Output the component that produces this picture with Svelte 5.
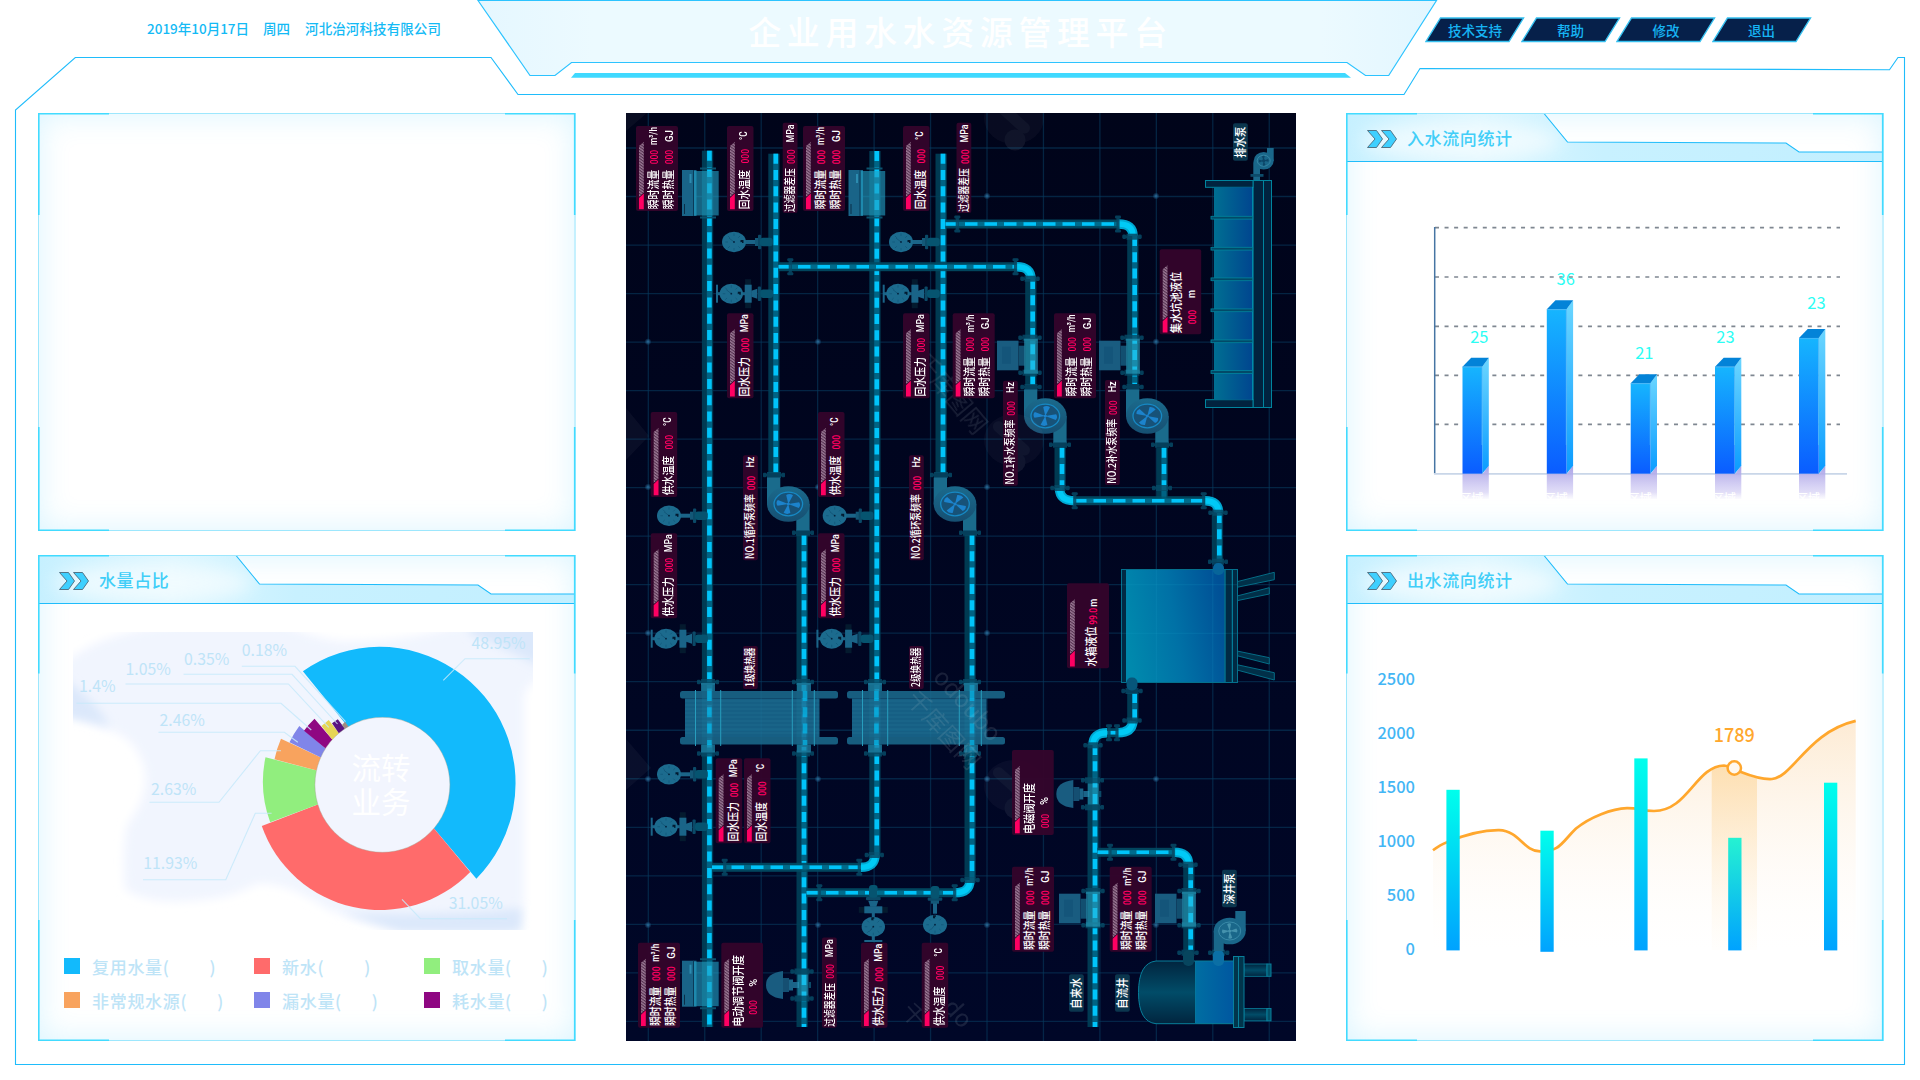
<script>
  const menu = ['技术支持', '帮助', '修改', '退出'];

  const legend = [
    { name: '复用水量', gap: 40, color: '#12bafc' },
    { name: '新水', gap: 40, color: '#ff6b6b' },
    { name: '取水量', gap: 30, color: '#91ee7e' },
    { name: '非常规水源', gap: 30, color: '#f8a35e' },
    { name: '漏水量', gap: 30, color: '#8085e9' },
    { name: '耗水量', gap: 30, color: '#8f0782' }
  ];

  const slices = [
    { color: '#12bafc', d: 'M302.9 671.3A136.5 136.5 0 0 1 379.3 646.8A136.3 136.3 0 0 1 476.4 878.7L434.2 828.7L382 785L347.3 726Z' },
    { color: '#ff6b6b', d: 'M470.2 872A125.5 125.5 0 0 1 261.8 826L317 804.7L382 785L434.2 828.7Z' },
    { color: '#91ee7e', d: 'M270.2 822.3A117 117 0 0 1 265.5 757.3L315 770L382 785L317 804.7Z' },
    { color: '#f8a35e', d: 'M274.5 759.3A107 107 0 0 1 281 738.7L320.4 757.3L382 785L315 770Z' },
    { color: '#8085e9', d: 'M289.5 742.3A98 98 0 0 1 299.3 726L324.7 747.7L382 785L320.4 757.3Z' },
    { color: '#8f0782', d: 'M304 730.7A92 92 0 0 1 314.5 718.7L331.6 738.7L382 785L324.7 747.7Z' },
    { color: '#e6d556', d: 'M321.5 726L328.7 720L338.2 732.3L382 785L331.6 738.7Z' },
    { color: '#5a1481', d: 'M332 723.3L337.8 719.3L344.4 728L382 785L338.2 732.3Z' },
    { color: '#a08a82', d: 'M341.8 725.3L345 721.7L348 726L382 785L344.4 728Z' }
  ];

  const callouts = [
    { t: '48.95%', x: 471.6, y: 643.3, p: '529.8,658.7 465,658.7 443.3,680.3' },
    { t: '0.18%', x: 241.8, y: 650.3, p: '241.8,666.3 295,666.3 345.5,721.7' },
    { t: '0.35%', x: 184, y: 659.2, p: '183.6,674.3 292,674.3 337.5,724' },
    { t: '1.05%', x: 125.5, y: 669.3, p: '125.5,684 288.4,684 328.7,727.3' },
    { t: '1.4%', x: 79, y: 686.3, p: '76.4,703.3 281,703.3 311.3,730' },
    { t: '2.46%', x: 159.6, y: 720, p: '158.5,732.3 284.4,732.3 297.8,742.3' },
    { t: '2.63%', x: 151, y: 789.3, p: '149.5,802.3 219,802.3 260.4,750.7 281,750.7' },
    { t: '11.93%', x: 143.3, y: 863.3, p: '143,879.7 225.8,879.7 255.3,813.3 271.6,813.3' },
    { t: '31.05%', x: 448.7, y: 903.3, p: '507,918.7 420.4,918.7 402,899.3' }
  ];

  const inflow = [
    { x: 1462.5, top: 366.7, v: '25', lx: 1479.3, ly: 337.3 },
    { x: 1546.8, top: 309.3, v: '36', lx: 1565.7, ly: 279.3 },
    { x: 1630.7, top: 383.3, v: '21', lx: 1644.3, ly: 353.7 },
    { x: 1715, top: 366.7, v: '23', lx: 1725.4, ly: 337.3 },
    { x: 1799, top: 338, v: '23', lx: 1816.4, ly: 303.3 }
  ];
  const inflowGrid = [227.7, 277, 326.3, 375.3, 424.3];

  const outflowTicks = ['2500', '2000', '1500', '1000', '500', '0'];
  const outflow = [
    { x: 1446.4, top: 789.8, bottom: 950.4 },
    { x: 1540.4, top: 830.7, bottom: 951.8 },
    { x: 1634.3, top: 758.4, bottom: 950.4 },
    { x: 1728.2, top: 837.8, bottom: 950.4 },
    { x: 1824, top: 782.7, bottom: 950.4 }
  ];
  const curve =
    'M1433 850.3C1438 846.5 1442 844 1447 842.2C1462 836 1480 830 1499 830.2C1520 831 1523 851 1540 851.4C1560 852 1562 842 1576 828.5C1590 817 1612 808.5 1627 808.1C1640 808 1640 811 1654 811C1688 811 1696 766 1724 765.5C1732 766 1733 768 1741 772C1751 776 1762 779.6 1772 779C1793 777 1808 732 1855.7 720.9';

  const gridX = Array.from({ length: 12 }, (_, i) => 648.3 + i * 56.45);
  const gridY = Array.from({ length: 19 }, (_, i) => 148 + i * 48.52);
  const stars = [
    [648, 341.7], [818, 341.7], [987, 196], [1156, 196], [1156, 341.7], [648, 487], [818, 487], [987, 487],
    [648, 633], [987, 633], [1156, 633], [648, 779], [818, 779], [987, 779], [1156, 779],
    [648, 925], [818, 925], [987, 925], [1156, 925]
  ];

  // Vertical runs: [x, top, bottom]; horizontal runs: [y, left, right]
  const vertical = [
    [709.4, 150.7, 1027], [775.8, 153.7, 473], [876.8, 151, 855], [943, 153.7, 473],
    [804, 535, 1027], [972, 535, 880], [1032.7, 279, 385], [1134.7, 236, 384],
    [1062, 447.7, 488], [1164, 447.7, 499], [1219.3, 513, 562], [1134.7, 693, 721],
    [1095, 745, 1027], [1190.7, 864, 950]
  ];
  const horizontal = [
    [266.7, 778.5, 1017], [224, 945.5, 1119], [500.7, 1074, 1205], [732.7, 1105, 1120],
    [852.3, 1097.5, 1174], [867.3, 712, 861], [892.7, 806.5, 955]
  ];
  const bends = [
    'M1016.7 266.7Q1031 266.7 1031 279', 'M1118.7 224Q1133 224 1133 236', 'M1059.5 488Q1059.5 500.7 1074 500.7',
    'M1205 500.7Q1218.5 500.7 1218.5 512.5', 'M1133 721Q1132 732.7 1118 732.7', 'M1107 732.7Q1093 732.7 1093 745',
    'M1174 852.3Q1188.5 852.3 1188.5 864', 'M861 867.3Q875 867.3 875 855', 'M955 892.7Q970 892.7 970 880'
  ];
  const flangesH = [
    [1132, 236.7, 19], [1030, 278.7, 19], [1031, 387, 21], [1133, 387, 21], [1030, 337.7, 23], [1030, 372.7, 23],
    [1132, 337.7, 23], [1132, 372.7, 23], [1060, 444.7, 22], [1162, 444.7, 22], [1060, 488, 19], [1162, 488, 20],
    [1218, 512.7, 19], [1218, 561.7, 20], [1132, 691, 21], [1132, 720.5, 19], [1093, 745.3, 19], [1092.5, 780.3, 23],
    [1092.5, 807.3, 23], [1188, 864.7, 19], [1093, 891, 23], [1093, 925.3, 23], [1189, 891, 23], [1189, 925.3, 23],
    [1188, 952.7, 21], [1218.7, 952.7, 21], [874.3, 855, 19], [970, 880, 19], [774, 475, 22], [803, 532.7, 22],
    [941, 475, 22], [970, 532.7, 22], [708, 682, 22], [803, 682, 22], [875, 682, 22], [970, 682, 22],
    [708, 753.5, 22], [803, 753.5, 22], [875, 753.5, 22], [970, 753.5, 22], [802, 971.5, 23], [802, 998.5, 23]
  ];
  const flangesV = [
    [1118, 224], [957.3, 224], [790.3, 266.7], [1015.5, 266.7], [1074.7, 500.7], [1203.7, 500.7], [1109, 732.7],
    [1117, 732.7], [1110, 852.3], [1173.5, 852.3], [724.7, 867.3], [859.3, 867.3], [819.3, 892.7], [954.7, 892.7]
  ];
  // [x, y, rotation of the fan]
  const pumps = [[788.3, 504, 12], [955, 504, 35], [1045.3, 416, 12], [1147.3, 416, 35]];
  const bigMeters = [[682, 170], [848.5, 170], [682, 960.7]];
  const smallMeters = [[997, 340.7], [1099, 340.7], [1059, 893.7], [1155, 893.7]];
  const thermometers = [[734, 242, 0], [901, 242, 0], [669, 515.7, 0], [834.7, 515.7, 0], [669, 774.3, 0], [935, 924.7, -90]];
  const manometers = [[731.3, 293.7, 0], [898, 293.7, 0], [666, 638.7, 0], [831.7, 638.7, 0], [666, 826.7, 0], [873.3, 926.7, -90]];
  const valves = [[766, 985], [1056.3, 794]];
  const exchangers = [680, 847];
  const poolWalls = [217.7, 248.7, 279.3, 310.3, 341.3, 372];

  // Text run on a tag: s = text, x = start along the tag, y = middle across it, l = length, k = kind
  const run = (s, x, y, l, k = 'cn') => ({ s, x, y, l, k });
  const flow = (x, b) => ({
    x, b, w: 42, h: 85, strip: true,
    runs: [
      run('瞬时流量', 1.7, 17, 39.5), run('000', 46.7, 17.3, 14.5, 'num'), run('m³/h', 66, 17, 18, 'unit'),
      run('瞬时热量', 1.7, 32.3, 39.5), run('000', 46.7, 32.6, 14.5, 'num'), run('GJ', 69, 32.3, 12, 'unit')
    ]
  });
  const single = (x, b, name, unit) => ({
    x, b, w: 26.5, h: 85, strip: true,
    runs: [
      run(name, 1.7, 17.7, 39.5), run('000', unit === 'MPa' ? 46 : 47.5, 18.2, 14.5, 'num'),
      unit === 'MPa' ? run('MPa', 66, 17.2, 18, 'unit') : run('°C', 71, 16, 8.5, 'unit')
    ]
  });
  const filter = (x, b) => ({
    x, b, w: 14.8, h: 90.3,
    runs: [run('过滤器差压', 1, 7.6, 43.7, 'sm'), run('000', 49, 8.2, 14.5, 'num'), run('MPa', 70.5, 6.8, 18, 'unit')]
  });
  const pumpTag = (x, b, name) => ({
    x, b, w: 14.8, h: 105,
    runs: [run(name, 1.3, 6.5, 64.7, 'sm'), run('000', 70, 8, 14.5, 'num'), run('Hz', 92.7, 6.5, 11, 'unit')]
  });
  const tags = [
    flow(636, 211), flow(803, 211), flow(952.7, 398.3), flow(1054, 398.3), flow(638, 1027.7), flow(1012, 951.7), flow(1109.7, 951.7),
    single(727, 211, '回水温度', '°C'), single(903, 211, '回水温度', '°C'),
    single(727, 398.3, '回水压力', 'MPa'), single(903, 398.3, '回水压力', 'MPa'),
    single(650.7, 497, '供水温度', '°C'), single(818, 497, '供水温度', '°C'),
    single(650.7, 618.3, '供水压力', 'MPa'), single(818, 618.3, '供水压力', 'MPa'),
    single(715.7, 843.3, '回水压力', 'MPa'), single(744, 843.3, '回水温度', '°C'),
    single(861, 1027.7, '供水压力', 'MPa'), single(921.7, 1027.7, '供水温度', '°C'),
    filter(782.7, 213), filter(956.5, 213), filter(822, 1027.7),
    pumpTag(1003, 485.7, 'NO.1补水泵频率'), pumpTag(1105, 485, 'NO.2补水泵频率'),
    pumpTag(743, 560.3, 'NO.1循环泵频率'), pumpTag(909, 560.3, 'NO.2循环泵频率'),
    { x: 743, b: 689, w: 14.8, h: 43, runs: [run('1级换热器', 2, 6.5, 39.5, 'sm')] },
    { x: 909, b: 689, w: 14.8, h: 43, runs: [run('2级换热器', 2, 6.5, 39.5, 'sm')] },
    { x: 1159.7, b: 334.3, w: 41.5, h: 85, strip: true, runs: [run('集水坑池液位', 1, 17.3, 61.5), run('000', 10, 32.5, 14.5, 'num'), run('m', 36.3, 31.3, 8, 'unit')] },
    { x: 721.3, b: 1027.7, w: 41.7, h: 85, strip: true, runs: [run('电动调节阀开度', 1, 17.3, 71.7), run('000', 13, 31.8, 14.5, 'num'), run('%', 41, 31.5, 8, 'unit')] },
    { x: 1012, b: 835, w: 41.7, h: 85, strip: true, runs: [run('电磁阀开度', 1, 17.3, 51), run('000', 6.7, 32.5, 14.5, 'num'), run('%', 30, 31.3, 8, 'unit')] },
    { x: 1067, b: 668.3, w: 42, h: 85, strip: true, runs: [run('水箱液位', 1.7, 24, 40), run('99.0', 43.5, 25.5, 17, 'num'), run('m', 61.5, 25.3, 8, 'unit')] },
    { x: 1233, b: 160.7, w: 14.8, h: 37.5, teal: true, runs: [run('排水泵', 3, 7.2, 31)] },
    { x: 1222, b: 907.3, w: 14.8, h: 37.5, teal: true, runs: [run('深井泵', 3, 7.2, 31)] },
    { x: 1069, b: 1011.7, w: 14.8, h: 37.5, teal: true, runs: [run('自来水', 3, 7.2, 31)] },
    { x: 1115, b: 1011.7, w: 14.8, h: 37.5, teal: true, runs: [run('自流井', 3, 7.2, 31)] }
  ];
</script>

{#snippet panelFrame(h, titled)}
  <svg class="layer" viewBox="0 0 538 {h}" width="538" height={h}>
    {#if titled}
      <path d="M0 .5H198L221.5 29L440 30L453 39H537V48.5H0Z" fill="url(#tabFill)" />
      <ellipse cx="115" cy="28" rx="100" ry="20" fill="#fff" opacity=".6" filter="url(#soft)" />
      <path d="M0 .5H198L221.5 29L440 30L453 39H537M0 48.5H537" class="line" />
      <path d="M21.5 17.5H30.5L36.5 26L30.5 34.5H21.5L29 26ZM35.5 17.5H44.5L50.5 26L44.5 34.5H35.5L43 26Z" fill="#3fd0ff" stroke="#4b6a7c" stroke-width=".9" />
    {/if}
    <rect x=".5" y=".5" width="536.5" height={h - 1} class="edge" />
    <path class="corner" d="M71 .8H.8V{h * 0.244}M467 .8H536.7V{h * 0.244}M71 {h - 0.8}H.8V{h * 0.751}M467 {h - 0.8}H536.7V{h * 0.751}" />
  </svg>
{/snippet}

{#snippet fan(rx, ry, color)}
  {#each [0, 90, 180, 270] as a}
    <path d="M0 0L{rx * 0.78} {-ry * 0.36}Q{rx} {-ry * 0.1} {rx * 0.86} {ry * 0.2}Z" fill={color} transform="rotate({a})" />
  {/each}
  <circle r="1.6" fill={color} />
{/snippet}

{#snippet dial(rx, ry)}
  <ellipse {rx} {ry} fill="#1c6b8e" />
  {#each [0, 45, 90, 135, 180, 225, 270, 315] as a}
    <path d="M6 0H8.6" stroke="#0f5275" stroke-width=".6" transform="rotate({a})" />
  {/each}
  <path d="M-5 -4L0 0" stroke="#0d4a6c" stroke-width=".6" />
  <circle r=".9" fill="#03233f" /><path d="M6.5 -2H9.5V1H8V0H6.5Z" fill="#021a30" />
{/snippet}

<div class="screen">
  <svg class="layer" viewBox="0 0 1920 1080" width="1920" height="1080">
    <defs>
      <linearGradient id="headFill"><stop offset="0" stop-color="#e5f7ff" /><stop offset=".12" stop-color="#ecfaff" /><stop offset=".88" stop-color="#ecfaff" /><stop offset="1" stop-color="#e2f6ff" /></linearGradient>
      <linearGradient id="tabFill"><stop offset="0" stop-color="#c6f0ff" /><stop offset=".25" stop-color="#dcf6ff" /><stop offset=".48" stop-color="#c8f1ff" /><stop offset="1" stop-color="#c2efff" /></linearGradient>
      <filter id="soft" x="-30%" y="-60%" width="160%" height="220%"><feGaussianBlur stdDeviation="9" /></filter>
    </defs>
    <path class="line" d="M15.5 1064.5V110L75.3 57.5H491L518 94.5H1404L1420 68.5L1889.5 69.7L1898 57.5H1904.5V1064.5Z" />
    <path d="M478 .5L530 75.5H555L571.5 62.5H1347L1365.5 75.5H1388.7L1436.5 .5Z" fill="url(#headFill)" stroke="#2cc3ff" stroke-width="1.2" />
    <path d="M575 73H1345L1351 77.7H571Z" fill="#3fd9ff" />
  </svg>

  <div class="content">
    <header>
      <div class="date"><span>2019年10月17日</span><span>周四</span><span>河北治河科技有限公司</span></div>
      <h1>企业用水水资源管理平台</h1>
      <nav>
        {#each menu as item}
          <a class="tab">
            <svg class="layer" viewBox="0 0 100 26" width="100" height="26"><path d="M15.5 1H98.5L84 24.5H1Z" fill="#06204a" stroke="#35c0f0" stroke-width="1.4" /></svg>
            <span>{item}</span>
          </a>
        {/each}
      </nav>
    </header>

    <main>
      <div class="column">
        <section class="panel short">{@render panelFrame(418, false)}</section>
        <section class="panel tall">
          {@render panelFrame(486, true)}
          <div class="body">
            <h2>水量占比</h2>
            <svg class="chart" viewBox="38 605 538 333" width="538" height="333">
              <defs>
                <clipPath id="cloudClip"><rect x="73" y="632" width="460" height="298" /></clipPath>
                <filter id="cloudBlur"><feGaussianBlur stdDeviation="5" /></filter>
              </defs>
              <g clip-path="url(#cloudClip)">
                <path filter="url(#cloudBlur)" fill="#f1f5fe" d="M60 664L92 645Q130 628 190 622H280Q310 638 340 641Q410 643 467 622H550V676Q524 682 524 700V900Q522 930 500 934H440Q380 928 329 910Q285 880 256 884Q235 896 210 899Q150 907 125 889Q122 850 127 825Q154 790 142 760Q130 733 104 729L60 709Z" />
                <path filter="url(#cloudBlur)" fill="#dbe8fb" d="M470 618H550V672Q520 655 470 634ZM340 912Q420 918 522 908V932H400ZM56 674Q92 695 110 726L60 716Z" />
              </g>
              {#each slices as s}<path d={s.d} fill={s.color} />{/each}
              <circle cx="382.4" cy="784.8" r="67.5" fill="#f2f5fe" stroke="#a0a08a" stroke-width=".4" />
              {#each callouts as c}
                <polyline points={c.p} class="lead" />
                <text x={c.x} y={c.y + 5.6} class="pct">{c.t}</text>
              {/each}
              <text x="381" y="778.5" class="hub">流转</text>
              <text x="381" y="813" class="hub">业务</text>
            </svg>
            <div class="legend">
              {#each legend as l}
                <div class="key"><i style:background={l.color}></i><span>{l.name}(</span><span style:margin-left="{l.gap}px">)</span></div>
              {/each}
            </div>
          </div>
        </section>
      </div>

      <svg class="diagram" viewBox="626 113 670 928" width="670" height="928">
        <defs>
          <linearGradient id="night" x2="0" y2="1"><stop offset="0" stop-color="#00041a" /><stop offset="1" stop-color="#000728" /></linearGradient>
          <linearGradient id="pool"><stop offset="0" stop-color="#006f92" /><stop offset="1" stop-color="#00458f" /></linearGradient>
          <linearGradient id="cistern" y1=".6" y2=".4"><stop offset="0" stop-color="#0089ad" /><stop offset=".5" stop-color="#0071a6" /><stop offset="1" stop-color="#005096" /></linearGradient>
          <linearGradient id="wellWater"><stop offset="0" stop-color="#006ea2" /><stop offset="1" stop-color="#0057a0" /></linearGradient>
          <linearGradient id="well" x2="0" y2="1"><stop offset="0" stop-color="#01253f" /><stop offset=".5" stop-color="#014c68" /><stop offset="1" stop-color="#01253f" /></linearGradient>
          <linearGradient id="metal" x2="0" y2="1"><stop offset="0" stop-color="#1b6a8c" /><stop offset="1" stop-color="#164f72" /></linearGradient>
          <pattern id="hatch" width="2.4" height="2.4" patternUnits="userSpaceOnUse" patternTransform="rotate(35)"><rect width="2.4" height="2.4" fill="#54304f" /><rect width="1.3" height="2.4" fill="#9c7a96" /></pattern>
          <radialGradient id="star"><stop offset="0" stop-color="#2a6c9a" /><stop offset="1" stop-color="#2a6c9a" stop-opacity="0" /></radialGradient>
        </defs>
        <rect x="626" y="113" width="670" height="928" fill="url(#night)" />
        {#each gridX as x}<path d="M{x} 113V1041" class="grid" />{/each}
        {#each gridY as y}<path d="M626 {y}H1296" class="grid" />{/each}
        {#each stars as [x, y]}<circle cx={x} cy={y} r="3.5" fill="url(#star)" />{/each}

        <!-- pump and drain pool -->
        <g fill="#1a678a">
          <rect x="1253.3" y="160" width="6.7" height="23" rx="3" /><rect x="1267" y="148" width="6.7" height="13" />
          <ellipse cx="1263.7" cy="160.7" rx="10" ry="8.8" /><rect x="1250.5" y="174" width="13" height="2.8" fill="#0d4b6a" />
          <g transform="translate(1263.7 160.7)"><ellipse rx="6.5" ry="5.5" fill="none" stroke="#4698b4" stroke-width=".6" />{@render fan(5.5, 5, '#0c4668')}</g>
        </g>
        <g fill="#01233f" stroke="#00859f">
          <rect x="1253" y="180.5" width="10.5" height="227" /><rect x="1263.5" y="180.5" width="8" height="227" />
          <rect x="1205.5" y="180.5" width="47.5" height="6.8" /><rect x="1205.5" y="399.7" width="47.5" height="7.8" />
          <rect x="1214" y="187.3" width="38.7" height="212.4" fill="url(#pool)" stroke="none" /><path d="M1252.7 187V400" stroke="#009ab4" />
          {#each poolWalls as y}<rect x="1211" y={y - 1.4} width="41.7" height="2.8" fill="#024a68" stroke-width=".8" />{/each}
        </g>

        <!-- pipe network -->
        {#each vertical as [x, a, b]}
          <rect x={x - 7.5} y={a} width="11.3" height={b - a} fill="#003f57" opacity=".92" />
          <rect x={x - 2.6} y={a} width="5.2" height={b - a} fill="#006384" />
          <path d="M{x} {a}V{b}" class="flow v" />
        {/each}
        {#each horizontal as [y, a, b]}
          <rect x={a} y={y - 4.5} width={b - a} height="9" fill="#014b63" opacity=".92" />
          <rect x={a} y={y - 2.2} width={b - a} height="4.4" fill="#006c8c" />
          <path d="M{a} {y}H{b}" class="flow h" />
        {/each}
        {#each bends as d}
          <path {d} fill="none" stroke="#00a8d2" stroke-width="9.5" /><path {d} fill="none" stroke="#00caf6" stroke-width="5.5" />
        {/each}
        {#each flangesH as [x, y, w]}
          <g class="flange"><rect x={x - w / 2} y={y - 1.3} width={w} height="2.6" /><rect x={x - w / 2} y={y - 2.3} width="3.5" height="4.6" rx="1" /><rect x={x + w / 2 - 3.5} y={y - 2.3} width="3.5" height="4.6" rx="1" /><rect x={x - w / 2 + 4} y={y - 3} width={w - 8} height="6" /></g>
        {/each}
        {#each flangesV as [x, y]}
          <g class="flange"><rect x={x - 1.6} y={y - 8} width="3.2" height="16" /><rect x={x - 3} y={y - 8.5} width="6" height="3" rx="1" /><rect x={x - 3} y={y + 5.5} width="6" height="3" rx="1" /></g>
        {/each}

        <!-- water tank -->
        <g fill="#013049" stroke="#056c86">
          <path d="M1237 581.7L1274.3 572.3V579.7L1237 587.3ZM1237 596L1269.3 587.7V594L1237 600.7ZM1237 670L1274.3 680V672.7L1237 664.7ZM1237 655.7L1269.3 664V657.7L1237 651Z" />
          <rect x="1121.5" y="569.5" width="116" height="113" fill="#012a44" stroke="#04708d" />
          <rect x="1126" y="570" width="98.5" height="112" fill="url(#cistern)" stroke="none" />
          <path d="M1225 570V682M1232.3 570V682" stroke="#0590ad" />
          <rect x="1213" y="563" width="11" height="12" rx="5" fill="#07659a" stroke="none" /><rect x="1126.5" y="677.5" width="11" height="13" rx="5" fill="#07567a" stroke="none" />
        </g>
        {#each gridX.slice(9, 11) as x}<path d="M{x} 570V682" stroke="#1aa0c8" stroke-width="1" opacity=".18" />{/each}
        <path d="M1121 584.7H1237M1121 633.3H1237" stroke="#1aa0c8" opacity=".18" />

        <!-- well tank with its pump -->
        <g stroke="#087f9b">
          <path d="M1195.5 961H1156Q1138.5 963 1138.5 992.5T1156 1023.7H1195.5Z" fill="url(#well)" />
          <rect x="1195.5" y="961" width="38.5" height="62.7" fill="url(#wellWater)" stroke="none" /><path d="M1195.5 961H1234M1195.5 1023.7H1234" />
          <rect x="1244" y="964" width="23" height="12.3" fill="url(#well)" stroke-width=".8" /><rect x="1267" y="964" width="4" height="12.3" fill="#035069" />
          <rect x="1244" y="1008.5" width="23" height="12.3" fill="url(#well)" stroke-width=".8" /><rect x="1267" y="1008.5" width="4" height="12.3" fill="#035069" />
          <rect x="1233.5" y="956.5" width="5" height="71" fill="#01354c" /><rect x="1238.5" y="956.5" width="5.5" height="71" fill="#01354c" />
        </g>
        <rect x="1183" y="950" width="11" height="16" rx="5" fill="#07455e" /><rect x="1213" y="950" width="11" height="16" rx="5" fill="#0b6fa5" />
        <g fill="#1a678a">
          <rect x="1213.7" y="931" width="10" height="20" /><rect x="1235.3" y="911" width="10.4" height="20" /><ellipse cx="1229.7" cy="931" rx="16" ry="13.3" />
          <g transform="translate(1229.7 931)"><ellipse rx="11" ry="9" fill="none" stroke="#4698b4" stroke-width=".7" />{@render fan(8.5, 7, '#4592ad')}</g>
        </g>

        <!-- devices on the pipes -->
        {#each pumps as [x, y, a]}
          <g transform="translate({x} {y})">
            <rect x="-21.3" y="-26.5" width="13.3" height="27" fill="#1a6b8c" /><rect x="8" y="0" width="13.3" height="26.5" fill="#1a6b8c" />
            <ellipse rx="21.3" ry="17.8" fill="url(#metal)" />
            <ellipse rx="14.3" ry="11.8" fill="#175278" stroke="#1789c4" stroke-width="1.3" />
            <g transform="scale(1 .84) rotate({a})">{@render fan(13, 12, '#1c83cc')}</g>
          </g>
        {/each}
        {#each bigMeters as [x, y]}
          <g transform="translate({x} {y})">
            <rect width="14.5" height="46" fill="#196488" /><rect x="12" y="1" width="24.7" height="44.5" fill="#22a0c4" opacity=".62" /><path d="M11.5 0V46" stroke="#0a3a58" /><path d="M2.5 34V44" stroke="#0a2e48" /><path d="M8.5 4V13" stroke="#2c8cb0" stroke-width="2" /><path d="M18 -1.5H34M18 47.5H34" stroke="#0b526e" stroke-width="2" />
          </g>
        {/each}
        {#each smallMeters as [x, y]}
          <g transform="translate({x} {y})">
            <rect width="21.5" height="29.6" fill="#195c80" /><rect x="5" y="6" width="9" height="17" fill="#14557a" /><rect x="21.5" y="5" width="6" height="20" fill="#124f70" /><rect x="27" y="-2" width="14" height="35" fill="#2fb4d4" opacity=".5" />
          </g>
        {/each}
        {#each thermometers as [x, y, r]}
          <g transform="translate({x} {y}) rotate({r})">
            <rect x="11" y="-2" width="11" height="4" fill="#1b6488" /><rect x="21" y="-4" width="4" height="8" fill="#135878" /><rect x="24" y="-7.3" width="3.2" height="14.6" rx="1" fill="#0b4a68" /><rect x="26" y="-4.3" width="12.8" height="8.6" rx="3" fill="#065470" />
            {@render dial(r ? 10 : 12, r ? 12 : 10.2)}
          </g>
        {/each}
        {#each manometers as [x, y, r]}
          <g transform="translate({x} {y}) rotate({r})">
            <rect x="-15.3" y="-9" width="2" height="18" fill="#1b6488" /><rect x="-14" y="-1.5" width="30" height="3" fill="#1b6488" />
            <rect x="13.8" y="-14.5" width="6" height="29" fill="#041a2e" /><rect x="13.4" y="-9" width="7" height="18" fill="#1a6488" /><path d="M20 -3L26 -5V5L20 3Z" fill="#1a6488" /><rect x="26.5" y="-7.3" width="3.2" height="14.6" rx="1" fill="#0b4a68" /><rect x="29" y="-4.3" width="12.8" height="8.6" rx="3" fill="#065470" />
            {@render dial(r ? 10 : 11.7, r ? 11.7 : 10)}
          </g>
        {/each}
        {#each valves as [x, y]}
          <g transform="translate({x} {y})">
            <path d="M17 -14Q0 -12 0 0T17 14Z" fill="#195c80" /><rect x="17" y="-7" width="6" height="14" fill="#154f72" /><rect x="23" y="-5.5" width="4" height="11" fill="#1b6488" /><rect x="27" y="-3" width="6" height="6" fill="#1b6488" /><rect x="31.5" y="-10.5" width="11" height="21" fill="#2fb4d4" opacity=".45" /><rect x="42.5" y="-3" width="2.5" height="6" fill="#0b4a68" />
          </g>
        {/each}
        {#each exchangers as x}
          <g transform="translate({x} 691)">
            <g fill="#1f81a4" opacity=".75"><rect x="21" y="-8" width="14" height="8" /><rect x="117" y="-8" width="14" height="8" /><rect x="21" y="53.5" width="14" height="8" /><rect x="117" y="53.5" width="14" height="8" /></g>
            <rect width="158" height="7.5" rx="2.5" fill="#1a678a" opacity=".9" /><rect y="46" width="158" height="7.5" rx="2.5" fill="#1a678a" opacity=".9" />
            <rect x="5" y="7.5" width="134.5" height="38.5" fill="#1a6f94" opacity=".86" />
            {#each [10, 14, 18, 22, 26, 30, 34, 38, 42] as y}<path d="M5 {y}H139.5" stroke="#3c9cba" stroke-width=".6" opacity=".28" />{/each}
            <path d="M15.5 -1V55M40.7 -1V55M112.3 -1V55M134.3 -1V55" stroke="#279dbd" stroke-width="1" />
            <path d="M29.4 0V54M125 0V54" class="flow v" opacity=".6" />
          </g>
        {/each}

        <!-- background marks -->
        <g fill="#b5c4cc" opacity=".09">
          {#each [[1014, 118], [1014, 440], [1014, 786]] as [x, y]}
            <ellipse cx={x} cy={y} rx="30" ry="26" opacity=".5" /><rect x={x - 26} y={y - 5} width="46" height="11" rx="5.5" transform="rotate(42 {x} {y})" /><circle cx={x + 1} cy={y + 22} r="10.5" />
          {/each}
          <path d="M626 408L649 436L626 460ZM626 739L651 768L626 790ZM626 113H647L626 131Z" opacity=".6" />
        </g>
        <g class="mark"><text transform="translate(914 362) rotate(50)">千库图网</text><text transform="translate(932 678) rotate(48)">odoubo</text><text transform="translate(905 700) rotate(48)">千库图网</text><text transform="translate(900 1012) rotate(48)">千</text><text transform="translate(942 1008) rotate(48)">do</text></g>

        <!-- value tags, read from bottom to top -->
        {#each tags as t}
          <g transform="translate({t.x} {t.b}) rotate(-90)">
            <rect width={t.h} height={t.w} rx="2" fill={t.teal ? '#0b3850' : '#33042b'} fill-opacity=".96" />
            {#if t.strip}
              <path d="M1.7 3H13L17.5 7.8H1.7Z" fill="#ff0062" /><path d="M14 3H65L69 7.8H18.5Z" fill="url(#hatch)" />
            {/if}
            {#each t.runs as r}
              <text x={r.x} y={r.y + (r.k === 'cn' ? 4.5 : r.k === 'sm' ? 4 : 4.2)} class={r.k} textLength={r.l} lengthAdjust="spacingAndGlyphs">{r.s}</text>
            {/each}
          </g>
        {/each}
      </svg>

      <div class="column">
        <section class="panel short">
          {@render panelFrame(418, true)}
          <div class="body">
            <h2>入水流向统计</h2>
            <svg class="chart" viewBox="1346 163 538 367" width="538" height="367">
              <defs>
                <linearGradient id="front" x2="0" y2="1"><stop offset="0" stop-color="#16b5fe" /><stop offset="1" stop-color="#0a5cff" /></linearGradient>
                <linearGradient id="side" x2="0" y2="1"><stop offset="0" stop-color="#6bd6ff" /><stop offset="1" stop-color="#0a9bff" /></linearGradient>
                <linearGradient id="mirror" x2="0" y2="1"><stop offset="0" stop-color="#a79fe6" /><stop offset=".8" stop-color="#cdc7f2" stop-opacity=".6" /><stop offset="1" stop-color="#d8d4f5" stop-opacity=".1" /></linearGradient>
              </defs>
              {#each inflowGrid as y}<path d="M1435 {y}H1840" stroke="#7f8791" stroke-width="1.7" stroke-dasharray="4 5.56" />{/each}
              <path d="M1434.7 227V474" stroke="#4675a3" stroke-width="1.5" />
              <path d="M1434 473.8H1847" stroke="#c9d6e8" stroke-width="1.8" />
              {#each inflow as b}
                <path d="M{b.x} 474H{b.x + 20}L{b.x + 26.3} 465.5V499H{b.x}Z" fill="url(#mirror)" />
                <path d="M{b.x + 19.7} {b.top}L{b.x + 26.3} {b.top - 9}V465.7L{b.x + 19.7} 473.7Z" fill="url(#side)" />
                <rect x={b.x} y={b.top} width="19.7" height={473.7 - b.top} fill="url(#front)" />
                <path d="M{b.x} {b.top}L{b.x + 8.7} {b.top - 9}H{b.x + 26.3}L{b.x + 19.7} {b.top}Z" fill="#0383d8" />
                <path d="M{b.x} {b.top + 0.4}H{b.x + 19.5}V445" fill="none" stroke="#4cb8f8" stroke-width=".8" />
                <text x={b.lx} y={b.ly + 5.7} class="value">{b.v}</text>
                <text x={b.x + 3} y="503" class="area">某区域</text>
              {/each}
            </svg>
          </div>
        </section>
        <section class="panel tall">
          {@render panelFrame(486, true)}
          <div class="body">
            <h2>出水流向统计</h2>
            <svg class="chart" viewBox="1346 605 538 434" width="538" height="434">
              <defs>
                <linearGradient id="area" x2="0" y2="1"><stop offset="0" stop-color="#fdebd4" /><stop offset="1" stop-color="#fff" stop-opacity=".2" /></linearGradient>
                <linearGradient id="band" x2="0" y2="1"><stop offset="0" stop-color="#fddfb2" /><stop offset="1" stop-color="#fff5e4" stop-opacity=".1" /></linearGradient>
                <linearGradient id="bar" x2="0" y2="1"><stop offset="0" stop-color="#00ffec" /><stop offset="1" stop-color="#00a2ff" /></linearGradient>
                <linearGradient id="barWarm" x2="0" y2="1"><stop offset="0" stop-color="#25f2d2" /><stop offset="1" stop-color="#00a2ff" /></linearGradient>
              </defs>
              <path d="{curve}V950H1433Z" fill="url(#area)" />
              <path d="M1711.7 770Q1718 765 1725 765.5C1737 768 1743 775 1757 778.5V950H1711.7Z" fill="url(#band)" />
              <path d={curve} fill="none" stroke="#ffa72d" stroke-width="2.7" />
              {#each outflow as b, i}<rect x={b.x} y={b.top} width="13.3" height={b.bottom - b.top} fill={i === 3 ? 'url(#barWarm)' : 'url(#bar)'} />{/each}
              <circle cx="1734.3" cy="768" r="6.7" fill="#fff8ee" stroke="#ffa72d" stroke-width="2.5" />
              <text x="1734.3" y="742" class="peak" textLength="41" lengthAdjust="spacingAndGlyphs">1789</text>
              {#each outflowTicks as t, i}<text x="1415" y={684.8 + i * 54} class="tick">{t}</text>{/each}
            </svg>
          </div>
        </section>
      </div>
    </main>
  </div>
</div>

<style>
  :global(body) { background: #fff; overflow: hidden; }
  .screen, .screen * { box-sizing: border-box; }
  .screen { display: grid; width: 1920px; height: 1080px; background: #fff; font-family: 'Noto Sans CJK SC', 'Noto Sans', sans-serif; }
  .layer, .content, .body, .tab > span { grid-area: 1 / 1; }
  svg { display: block; }
  h1, h2 { margin: 0; }

  .content { display: flex; flex-direction: column; }
  header { display: grid; grid-template-columns: 477px 958px 1fr; height: 113px; }
  .date { display: flex; padding: 18px 0 0 147px; font-size: 13.5px; line-height: 20px; font-weight: 500; color: #14baf5; white-space: nowrap; }
  .date span + span { margin-left: 14px; }
  .date span:last-child { margin-left: 15px; letter-spacing: 0.1px; }
  h1 { padding: 11px 0 0 9px; text-align: center; font-size: 33px; line-height: 40px; font-weight: 500; letter-spacing: 5.6px; color: #fff; }
  nav { display: flex; padding: 17px 0 0; margin-left: -10px; }
  .tab { display: grid; width: 100px; height: 26px; margin-right: -4.5px; place-items: center; font-size: 13.5px; line-height: 24px; font-weight: 500; color: #16b4f4; }
  .tab > span { padding-bottom: 1px; }

  main { display: flex; gap: 50px; padding: 0 37px 0 38px; }
  .column { display: flex; flex-direction: column; gap: 24px; width: 538px; }
  .panel { display: grid; box-shadow: inset 0 0 32px rgba(60, 200, 255, 0.2); }
  .short { height: 418px; }
  .tall { height: 486px; }
  .body { display: flex; flex-direction: column; }
  h2 { height: 50px; padding: 2px 0 0 61px; font-size: 17px; line-height: 46px; font-weight: 500; letter-spacing: 0.6px; color: #41cef8; }
  .line { fill: none; stroke: #1fbcfb; stroke-width: 1.1; }
  .edge { fill: none; stroke: #9de7fd; stroke-width: 1; }
  .corner { fill: none; stroke: #42dbff; stroke-width: 1.6; }

  .lead { fill: none; stroke: #c6e9fa; stroke-width: 1.1; stroke-opacity: 0.85; }
  .pct { font-size: 15.8px; fill: #bfe4f8; }
  .hub { font-size: 29.5px; fill: #fff; text-anchor: middle; }
  .legend { display: grid; grid-template-columns: 190px 170px 1fr; row-gap: 10px; padding: 16px 0 0 26px; }
  .key { display: flex; align-items: center; height: 24px; font-size: 17px; font-weight: 500; letter-spacing: 0.7px; color: #bee4f7; white-space: nowrap; }
  .key i { width: 16px; height: 16px; margin-right: 12px; }

  .value { font-size: 16.5px; fill: #2dfdf4; text-anchor: middle; }
  .area { font-size: 12px; font-weight: 500; fill: #fff; text-anchor: middle; }
  .tick { font-size: 16.5px; font-weight: 500; fill: #43b6f5; text-anchor: end; }
  .peak { font-size: 19.5px; font-weight: 500; fill: #ffa72d; text-anchor: middle; }

  .grid { fill: none; stroke: #073a5e; stroke-width: 1.3; stroke-opacity: 0.6; }
  .flow { fill: none; stroke: #00c4fa; }
  .flow.v { stroke-width: 4.6; stroke-dasharray: 10 6.3; }
  .flow.h { stroke-width: 3.4; stroke-dasharray: 12.5 7; }
  .flange { fill: #064a66; opacity: 0.85; }
  .cn { font-size: 12.5px; font-weight: 500; fill: #fff; }
  .sm { font-size: 11px; font-weight: 500; fill: #fff; }
  .num { font: 500 11.5px Roboto, sans-serif; fill: #ff0062; }
  .unit { font: 500 11.5px Roboto, sans-serif; fill: #fff; }
  .mark { font-size: 24px; fill: #b5c4cc; opacity: 0.14; }
</style>
